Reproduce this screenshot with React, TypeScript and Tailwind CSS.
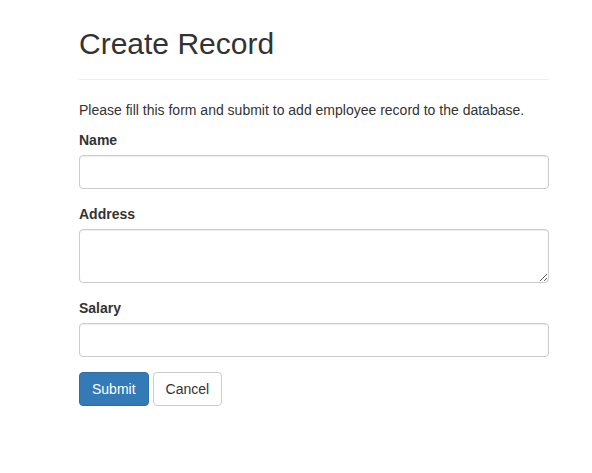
export default function App() {
  const inputClass =
    'block w-full h-[34px] px-3 py-1.5 text-sm text-[#555] bg-white border border-[#ccc] rounded-[4px] shadow-[inset_0_1px_1px_rgba(0,0,0,0.075)] outline-none';

  return (
    <div className="min-h-screen bg-white font-['Liberation_Sans',Arial,sans-serif] text-sm leading-5 text-[#333]">
      <div className="ml-[79px] w-[470px]">
        {/* Page header */}
        <div className="pb-[9px] mb-5 border-b border-[#eee]">
          <h2 className="pt-[27px] mb-2.5 text-[30px] leading-[33px] font-normal">Create Record</h2>
        </div>

        <p className="mb-2.5">Please fill this form and submit to add employee record to the database.</p>

        <form onSubmit={(e) => e.preventDefault()}>
          <div className="mb-[15px]">
            <label className="block mb-[5px] font-bold">Name</label>
            <input type="text" className={inputClass} />
          </div>
          <div className="mb-[15px]">
            <label className="block mb-[5px] font-bold">Address</label>
            <textarea className="block w-full h-[54px] px-3 py-1.5 text-sm text-[#555] bg-white border border-[#ccc] rounded-[4px] shadow-[inset_0_1px_1px_rgba(0,0,0,0.075)] outline-none" />
          </div>
          <div className="mb-[15px]">
            <label className="block mb-[5px] font-bold">Salary</label>
            <input type="text" className={inputClass} />
          </div>
          <div className="flex gap-1">
            <button
              type="submit"
              className="h-[34px] px-3 text-sm text-white bg-[#337ab7] border border-[#2e6da4] rounded-[4px]"
            >
              Submit
            </button>
            <button
              type="button"
              className="h-[34px] px-3 text-sm text-[#333] bg-white border border-[#ccc] rounded-[4px]"
            >
              Cancel
            </button>
          </div>
        </form>
      </div>
    </div>
  );
}
